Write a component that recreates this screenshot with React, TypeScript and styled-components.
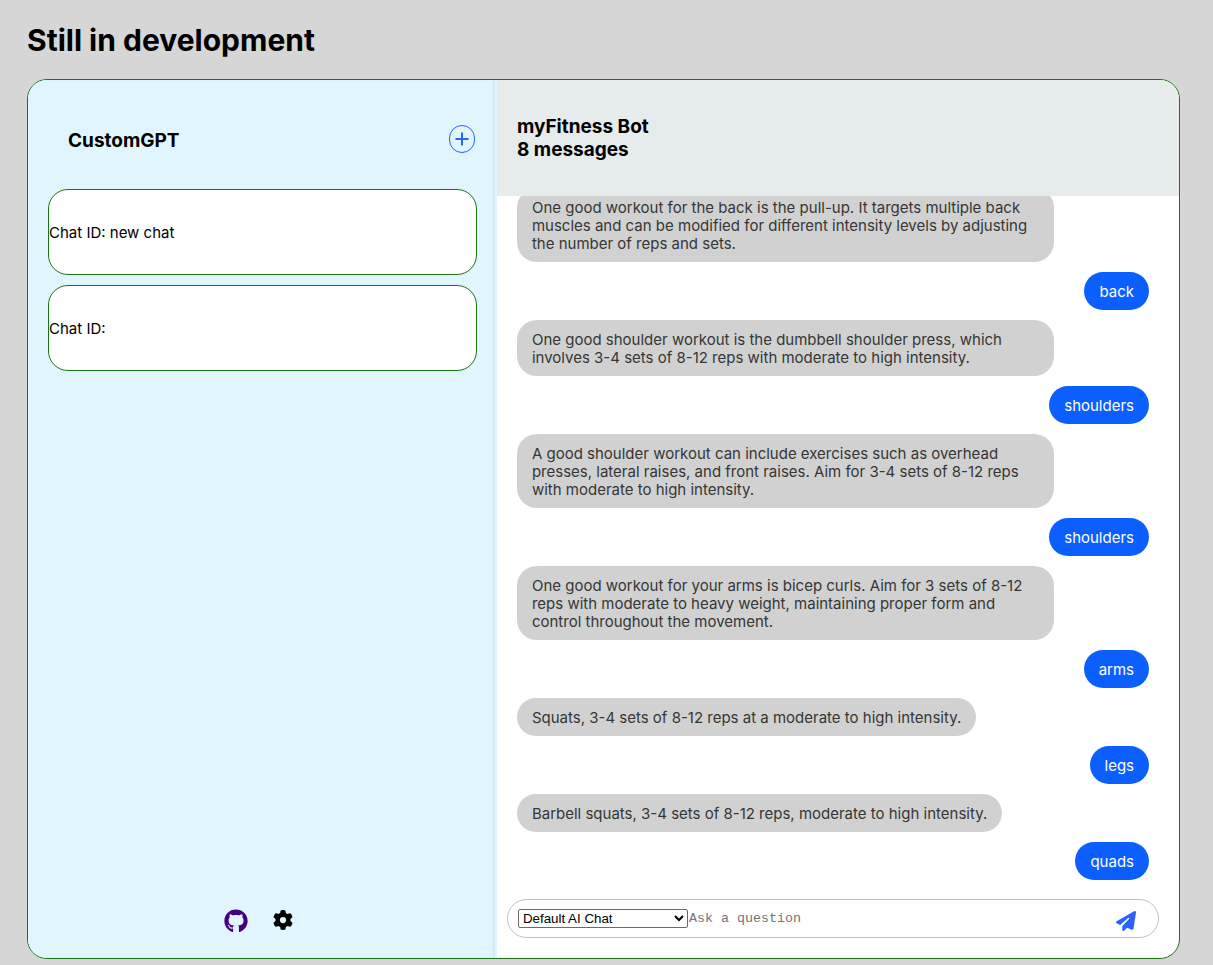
import React from "react";
import styled, { createGlobalStyle } from "styled-components";
import { FaGear, FaGithub, FaPaperPlane } from "react-icons/fa6";

const GlobalStyle = createGlobalStyle`
  *, *::before, *::after { box-sizing: border-box; }
  body {
    margin: 0;
    background: #d6d6d6;
    color: #000;
    font-family: Inter, "Liberation Sans", sans-serif;
    font-size: 15px;
  }
`;

const Page = styled.div`
  display: flex;
  flex-direction: column;
  min-height: 100vh;
  padding: 20px 33px 6px 27px;
`;

const PageTitle = styled.h1`
  margin: 0 0 19px;
  font-size: 30px;
  line-height: 40px;
`;

const Card = styled.main`
  display: grid;
  grid-template-columns: 11fr 16fr;
  height: calc(100vh - 85px);
  min-height: 480px;
  border: 1px solid #1b7411;
  border-radius: 20px;
  background: #fff;
  overflow: hidden;
`;

const Sidebar = styled.aside`
  display: flex;
  flex-direction: column;
  min-width: 0;
  padding: 0 20px;
  background: #e1f5fe;
  box-shadow: inset -2px 0 0 #e1f5fe, inset -4px 0 2px #cfe8f2;
`;

const SidebarHeader = styled.header`
  display: flex;
  align-items: center;
  justify-content: space-between;
  height: 109px;
  padding: 11px 2px 0 20px;
`;

const Heading = styled.h2`
  margin: 0;
  font-size: 19px;
  line-height: 23px;
`;

const AddButton = styled.button`
  display: flex;
  align-items: center;
  justify-content: center;
  width: 26px;
  height: 28px;
  margin-bottom: 3px;
  padding: 0;
  border: 1px solid #2962ff;
  border-radius: 13px;
  background: transparent;
  color: #2962ff;
  cursor: pointer;
`;

const ChatItem = styled.button`
  height: 86px;
  margin-bottom: 10px;
  padding: 0;
  border: 1px solid #1b7411;
  border-radius: 20px;
  background: #fff;
  color: #000;
  font: inherit;
  text-align: left;
  cursor: pointer;
`;

const SidebarFooter = styled.footer`
  display: flex;
  align-items: flex-start;
  justify-content: center;
  gap: 25px;
  margin-top: auto;
  padding: 0 8px 25px 0;
`;

const IconLink = styled.a`
  display: flex;
  color: #440080;
`;

const IconButton = styled.button<{ $color: string }>`
  display: flex;
  padding: 0;
  border: 0;
  background: none;
  color: ${(p) => p.$color};
  cursor: pointer;
`;

const SettingsButton = styled(IconButton)`
  margin-top: 1px;
`;

const Conversation = styled.section`
  display: flex;
  flex-direction: column;
  min-width: 0;
  min-height: 0;
`;

const ConversationHeader = styled.header`
  flex: none;
  display: flex;
  flex-direction: column;
  justify-content: center;
  height: 116px;
  padding: 0 20px;
  background: #e6ebec;
`;

const Messages = styled.div`
  flex: 1;
  display: flex;
  flex-direction: column-reverse;
  gap: 10px;
  min-height: 0;
  padding: 0 30px 0 20px;
  overflow-y: auto;
  scrollbar-width: none;
`;

const Bubble = styled.p<{ $mine: boolean }>`
  flex: none;
  align-self: ${(p) => (p.$mine ? "flex-end" : "flex-start")};
  max-width: 85%;
  margin: 0;
  padding: 11px 15px 9px;
  border-radius: 20px;
  background: ${(p) => (p.$mine ? "#0b5fff" : "#d1d1d1")};
  color: ${(p) => (p.$mine ? "#fff" : "#363636")};
  line-height: 18px;
`;

const Composer = styled.form`
  flex: none;
  display: flex;
  align-items: center;
  height: 39px;
  margin: 19px 20px 20px 10px;
  padding: 0 22px 0 10px;
  border: 1px solid #c0c0c0;
  border-radius: 20px;
`;

const SendButton = styled(IconButton)`
  margin-top: 4px;
`;

const ModeSelect = styled.select`
  width: 170px;
  height: 19px;
  border: 1px solid #6b6b6b;
  border-radius: 2px;
  background: #fff;
  color: #000;
  font-family: "Liberation Sans", sans-serif;
`;

const Question = styled.input`
  flex: 1;
  min-width: 0;
  padding: 0 1px;
  border: 0;
  outline: 0;
  background: transparent;
  font-family: "Liberation Mono", monospace;
  &::placeholder { color: #757575; }
`;

const chats = ["new chat", ""];

const messages = [
  { mine: true, text: "quads" },
  { mine: false, text: "Barbell squats, 3-4 sets of 8-12 reps, moderate to high intensity." },
  { mine: true, text: "legs" },
  { mine: false, text: "Squats, 3-4 sets of 8-12 reps at a moderate to high intensity." },
  { mine: true, text: "arms" },
  { mine: false, text: "One good workout for your arms is bicep curls. Aim for 3 sets of 8-12 reps with moderate to heavy weight, maintaining proper form and control throughout the movement." },
  { mine: true, text: "shoulders" },
  { mine: false, text: "A good shoulder workout can include exercises such as overhead presses, lateral raises, and front raises. Aim for 3-4 sets of 8-12 reps with moderate to high intensity." },
  { mine: true, text: "shoulders" },
  { mine: false, text: "One good shoulder workout is the dumbbell shoulder press, which involves 3-4 sets of 8-12 reps with moderate to high intensity." },
  { mine: true, text: "back" },
  { mine: false, text: "One good workout for the back is the pull-up. It targets multiple back muscles and can be modified for different intensity levels by adjusting the number of reps and sets." },
];

export default function App() {
  return (
    <>
      <GlobalStyle />
      <Page>
        <PageTitle>Still in development</PageTitle>
        <Card>
          <Sidebar>
            <SidebarHeader>
              <Heading>CustomGPT</Heading>
              <AddButton type="button" aria-label="New chat">
                <svg width="14" height="14" viewBox="0 0 14 14" fill="none" stroke="currentColor" strokeWidth="2">
                  <path d="M7 .5v13M.5 7h13" />
                </svg>
              </AddButton>
            </SidebarHeader>
            {chats.map((chat) => (
              <ChatItem type="button" key={chat}>Chat ID: {chat}</ChatItem>
            ))}
            <SidebarFooter>
              <IconLink href="#" aria-label="GitHub"><FaGithub size={24} /></IconLink>
              <SettingsButton type="button" $color="#000" aria-label="Settings"><FaGear size={20} /></SettingsButton>
            </SidebarFooter>
          </Sidebar>
          <Conversation>
            <ConversationHeader>
              <Heading>myFitness Bot</Heading>
              <Heading>8 messages</Heading>
            </ConversationHeader>
            <Messages>
              {messages.map((m, i) => (
                <Bubble key={i} $mine={m.mine}>{m.text}</Bubble>
              ))}
            </Messages>
            <Composer onSubmit={(e) => e.preventDefault()}>
              <ModeSelect aria-label="Chat mode">
                <option>Default AI Chat</option>
              </ModeSelect>
              <Question type="text" aria-label="Question" placeholder="Ask a question" />
              <SendButton type="submit" $color="#2962ff" aria-label="Send"><FaPaperPlane size={20} /></SendButton>
            </Composer>
          </Conversation>
        </Card>
      </Page>
    </>
  );
}
